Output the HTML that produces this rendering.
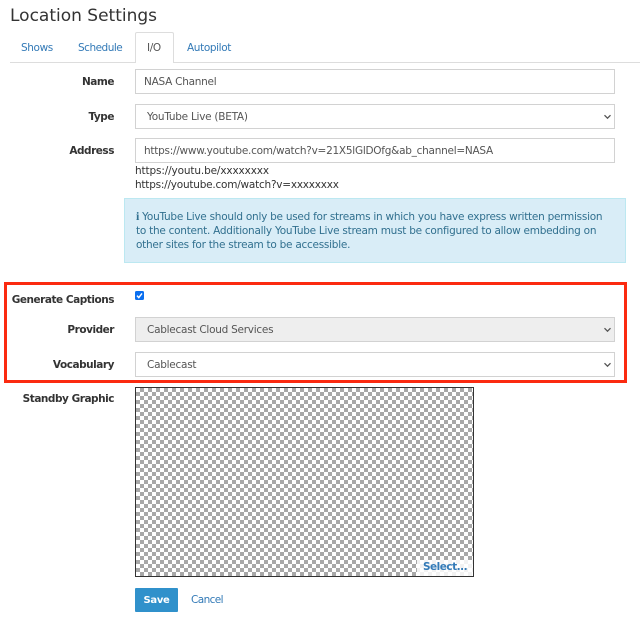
<!DOCTYPE html>
<html><head><meta charset="utf-8"><style>
html,body{margin:0;padding:0;background:#fff}
body{width:640px;height:626px;overflow:hidden;position:relative;font-family:"DejaVu Sans",Verdana,sans-serif;font-size:10.5px;color:#333;letter-spacing:-.26px}
#w{position:absolute;left:0;top:0;width:640px;height:626px;filter:blur(.3px)}
.a{position:absolute;white-space:nowrap}
.l{position:absolute;right:526px;font-weight:bold;color:#333;white-space:nowrap;line-height:14px;letter-spacing:-.47px}
.f{position:absolute;left:135px;width:478px;height:23px;border:1px solid #d2d2d2;background:#fff;color:#555;line-height:25px;box-sizing:content-box}
.f span{position:absolute;white-space:nowrap}
.f svg{position:absolute;right:2px;top:9px}
.t{position:absolute;top:41px;line-height:14px;color:#337ab7;letter-spacing:-.38px}
</style></head><body>
<div class="a" style="left:135px;top:387px;width:339px;height:190px;box-sizing:border-box;border:1px solid #333;background-color:#fff;background-image:conic-gradient(#a8a8a8 25%,#fff 0 50%,#a8a8a8 0 75%,#fff 0);background-size:8px 8px"></div>
<div id="w">
<div class="a" style="left:10px;top:5px;font-size:17px;line-height:22px;color:#333;letter-spacing:0">Location Settings</div>
<div class="a" style="left:10px;top:62px;width:630px;height:1px;background:#ddd"></div>
<div class="a" style="left:135px;top:32px;width:39px;height:31px;border:1px solid #ddd;border-bottom:0;box-sizing:border-box;background:#fff;border-radius:2px 2px 0 0"></div>
<div class="t" style="left:21px">Shows</div>
<div class="t" style="left:78px;letter-spacing:-.5px">Schedule</div>
<div class="t" style="left:147px;color:#555">I/O</div>
<div class="t" style="left:187px">Autopilot</div>

<div class="l" style="top:75px">Name</div>
<div class="f" style="top:69px"><span style="left:8px">NASA Channel</span></div>

<div class="l" style="top:110px">Type</div>
<div class="f" style="top:104px"><span style="left:11px">YouTube Live (BETA)</span><svg width="9" height="6" viewBox="0 0 9 6"><path d="M1.5 1.2L4.5 4.2L7.5 1.2" fill="none" stroke="#555" stroke-width="1.3"/></svg></div>

<div class="l" style="top:144px">Address</div>
<div class="f" style="top:138px"><span style="left:8px">https://www.youtube.com/watch?v=21X5lGlDOfg&amp;ab_channel=NASA</span></div>
<div class="a" style="left:135px;top:164px;line-height:14px;color:#333;letter-spacing:-.14px">https://youtu.be/xxxxxxxx</div>
<div class="a" style="left:135px;top:178px;line-height:14px;color:#333;letter-spacing:-.23px">https://youtube.com/watch?v=xxxxxxxx</div>

<div class="a" style="left:124px;top:198px;width:502px;height:65px;box-sizing:border-box;background:#d9edf7;border:1px solid #bce8f1"></div>
<div class="a" style="left:136px;top:209px;line-height:14px;color:#31708f"><b style="font-family:'Liberation Serif',serif;font-size:12px">i</b> YouTube Live should only be used for streams in which you have express written permission</div>
<div class="a" style="left:136px;top:224px;line-height:14px;color:#31708f">to the content. Additionally YouTube Live stream must be configured to allow embedding on</div>
<div class="a" style="left:136px;top:238px;line-height:14px;color:#31708f">other sites for the stream to be accessible.</div>

<div class="a" style="left:4px;top:282px;width:623px;height:101px;box-sizing:border-box;border:3.5px solid #fb2a10"></div>

<div class="l" style="top:293px">Generate Captions</div>
<svg class="a" style="left:135px;top:291px" width="9" height="9" viewBox="0 0 9 9"><rect width="9" height="9" rx="1.5" fill="#0a6ff0"/><path d="M2 4.6L3.8 6.6L7 2.4" fill="none" stroke="#fff" stroke-width="1.4"/></svg>

<div class="l" style="top:323px">Provider</div>
<div class="f" style="top:317px;background:#eee"><span style="left:11px">Cablecast Cloud Services</span><svg width="9" height="6" viewBox="0 0 9 6"><path d="M1.5 1.2L4.5 4.2L7.5 1.2" fill="none" stroke="#555" stroke-width="1.3"/></svg></div>

<div class="l" style="top:358px">Vocabulary</div>
<div class="f" style="top:352px"><span style="left:11px">Cablecast</span><svg width="9" height="6" viewBox="0 0 9 6"><path d="M1.5 1.2L4.5 4.2L7.5 1.2" fill="none" stroke="#555" stroke-width="1.3"/></svg></div>

<div class="l" style="top:392px">Standby Graphic</div>
<div class="a" style="left:417px;top:560px;width:56px;height:16px;background:rgba(255,255,255,.85);color:#337ab7;font-weight:bold;line-height:14px;text-align:center;letter-spacing:-.5px">Select...</div>

<div class="a" style="left:135px;top:588px;width:43px;height:24px;background:#3091cb;border-radius:1px;color:#fff;font-weight:bold;font-size:10px;line-height:25px;text-align:center;letter-spacing:-.3px">Save</div>
<div class="a" style="left:191px;top:593px;line-height:14px;color:#337ab7;letter-spacing:-.6px">Cancel</div>
</div></body></html>
